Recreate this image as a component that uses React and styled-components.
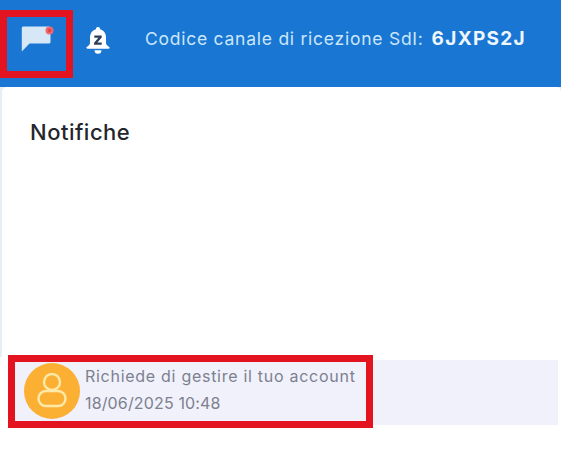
import React from "react";
import styled, { createGlobalStyle } from "styled-components";

const Global = createGlobalStyle`
  html, body { margin: 0; padding: 0; background: #fff; }
  body { font-family: "Inter", "Liberation Sans", sans-serif; }
`;

const Page = styled.div`
  position: relative;
  width: 561px;
  height: 469px;
  overflow: hidden;
  display: flex;
  flex-direction: column;
  background: #fff;
`;

const Header = styled.header`
  flex: 0 0 87px;
  display: flex;
  align-items: center;
  background: #1976d2;
  padding: 0 0 11px 21px;
  box-sizing: border-box;
`;

const Bubble = styled.svg`
  display: block;
  width: 34px;
  height: 28px;
  margin-top: 4px;
`;

const Bell = styled.svg`
  display: block;
  width: 24px;
  height: 27px;
  margin: 4px 0 0 31px;
`;

const ChannelText = styled.div`
  display: flex;
  align-items: baseline;
  margin-left: 35px;
  color: #cbe6fa;
  font-size: 17.5px;
  letter-spacing: 0.75px;
  white-space: nowrap;
`;

const ChannelCode = styled.strong`
  margin-left: 8px;
  color: #eef7fe;
  font-size: 19px;
  font-weight: 700;
  letter-spacing: 1.3px;
`;

const Body = styled.div`
  flex: 1;
  display: flex;
  background: linear-gradient(#e6eff6 0, #e6eff6 270px, #fff 270px);
`;

const Panel = styled.section`
  flex: 1;
  display: flex;
  flex-direction: column;
  margin-left: 2px;
  padding-bottom: 44px;
  border-radius: 5px 5px 0 0;
  background: #fff;
`;

const PanelTitle = styled.h2`
  margin: 31px 0 0 28px;
  color: #25262d;
  font-size: 22px;
  font-weight: 500;
  letter-spacing: 0.5px;
  line-height: 28px;
`;

const NotificationRow = styled.div`
  display: flex;
  align-items: center;
  height: 65px;
  margin: auto 3px 0 6px;
  padding-left: 16px;
  background: #f0f1fb;
`;

const Avatar = styled.div`
  flex: 0 0 56px;
  height: 56px;
  margin-bottom: 3px;
  display: flex;
  align-items: center;
  justify-content: center;
  border-radius: 50%;
  background: #fbb034;
`;

const AvatarIcon = styled.svg`
  display: block;
  width: 34px;
  height: 36px;
`;

const RowText = styled.div`
  margin: 0 0 6px 5px;
  color: #7d808f;
  font-size: 16px;
  letter-spacing: 0.72px;
  line-height: 27px;
  white-space: nowrap;
`;

const RowDate = styled.div`
  letter-spacing: 0.15px;
`;

const Highlight = styled.div`
  position: absolute;
  box-sizing: border-box;
  border: 7px solid #e3131f;
  left: ${(p) => p.$left}px;
  top: ${(p) => p.$top}px;
  width: ${(p) => p.$width}px;
  height: ${(p) => p.$height}px;
`;

export default function App() {
  return (
    <Page>
      <Global />
      <Header>
        <Bubble viewBox="0 0 34 28" aria-hidden="true">
          <path d="M2 0.5H28a1.5 1.5 0 0 1 1.5 1.5V16a1.500 1.500 0 0 1-1.500 1.500H8.500L0.800 25.500V2A1.500 1.500 0 0 1 2 0.500Z" fill="#d6e7f7" />
          <circle cx="28.5" cy="4.5" r="4" fill="#ef6a6e" />
          <circle cx="28.5" cy="4.5" r="2" fill="#e2474c" />
        </Bubble>
        <Bell viewBox="0 0 24 27" aria-hidden="true">
          <path d="M12 0a2 2 0 0 1 2 2.3c4 1 6 4.3 6 8.2v5.2c0 1.600 1.200 3 3.200 4.300.8.600.4 1.700-.600 1.700H1.400c-1 0-1.400-1.100-.600-1.700C2.800 18.700 4 17.300 4 15.700V10.500c0-3.900 2-7.200 6-8.200A2 2 0 0 1 12 0Z" fill="#fff" />
          <path d="M8.500 23.200h7a3.500 3.500 0 0 1-7 0Z" fill="#fff" />
          <path d="M8.300 8.500h7.400v2l-4.300 5h4.300v2.300H8.100v-2l4.300-5H8.300Z" fill="#2c3e5a" />
        </Bell>
        <ChannelText>
          Codice canale di ricezione SdI:
          <ChannelCode>6JXPS2J</ChannelCode>
        </ChannelText>
      </Header>
      <Body>
        <Panel>
          <PanelTitle>Notifiche</PanelTitle>
          <NotificationRow>
            <Avatar>
              <AvatarIcon viewBox="0 0 34 36" fill="none" stroke="#ffe9a8" strokeWidth="2.4" aria-hidden="true">
                <circle cx="17" cy="9" r="8" />
                <rect x="3.500" y="18" width="27" height="15" rx="7.500" />
              </AvatarIcon>
            </Avatar>
            <RowText>
              Richiede di gestire il tuo account
              <RowDate>18/06/2025 10:48</RowDate>
            </RowText>
          </NotificationRow>
        </Panel>
      </Body>
      <Highlight $left={0} $top={10} $width={73} $height={68} />
      <Highlight $left={8} $top={355} $width={365} $height={73} />
    </Page>
  );
}
